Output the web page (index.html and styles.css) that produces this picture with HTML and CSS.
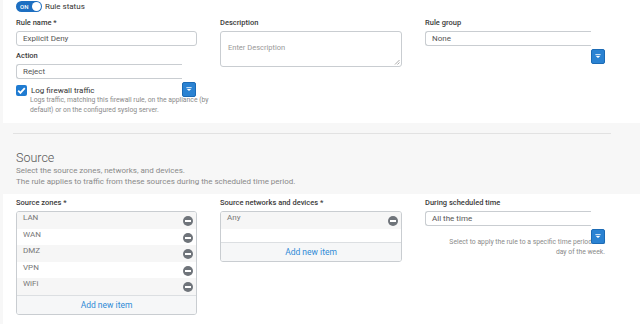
FILE: index.html
```html
<!DOCTYPE html>
<html lang="en">
<head>
    <meta charset="UTF-8">
    <title>Firewall rule</title>
    <link rel="stylesheet" href="styles.css">
</head>
<body>
    <div class="page">
        <section class="card general">
            <div class="status-row">
                <span class="toggle"><span class="toggle-text">ON</span><span class="knob"></span></span>
                <span class="status-label">Rule status</span>
            </div>

            <div class="columns">
                <div class="col">
                    <div class="field-label">Rule name *</div>
                    <div class="input">Explicit Deny</div>

                    <div class="field-label spaced">Action</div>
                    <div class="select">
                        Reject
                        <span class="drop-btn"><svg viewBox="0 0 8 6"><rect x="0.5" y="0" width="7" height="1.2"/><path d="M1 2.2h6L4 5z"/></svg></span>
                    </div>

                    <div class="check-row">
                        <span class="checkbox"><svg viewBox="0 0 10 10"><path d="M2 5.2l2 2 4-4.4" /></svg></span>
                        <span class="check-label">Log firewall traffic</span>
                    </div>
                    <p class="help">Logs traffic, matching this firewall rule, on the appliance (by<br>default) or on the configured syslog server.</p>
                </div>

                <div class="col">
                    <div class="field-label">Description</div>
                    <div class="textarea">
                        <span class="placeholder">Enter Description</span>
                        <svg class="grip" viewBox="0 0 6 6"><path d="M5.5 1L1 5.5M5.5 3.5L3.5 5.5"/></svg>
                    </div>
                </div>

                <div class="col">
                    <div class="field-label">Rule group</div>
                    <div class="select">
                        None
                        <span class="drop-btn"><svg viewBox="0 0 8 6"><rect x="0.5" y="0" width="7" height="1.2"/><path d="M1 2.2h6L4 5z"/></svg></span>
                    </div>
                </div>
            </div>
        </section>

        <section class="band">
            <hr class="divider">
            <h2 class="section-title">Source</h2>
            <p class="section-desc">Select the source zones, networks, and devices.<br>The rule applies to traffic from these sources during the scheduled time period.</p>
        </section>

        <section class="card source">
            <div class="columns">
                <div class="col">
                    <div class="field-label">Source zones *</div>
                    <div class="list">
                        <div class="list-row shaded"><span>LAN</span><span class="minus"></span></div>
                        <div class="list-row"><span>WAN</span><span class="minus"></span></div>
                        <div class="list-row shaded"><span>DMZ</span><span class="minus"></span></div>
                        <div class="list-row"><span>VPN</span><span class="minus"></span></div>
                        <div class="list-row shaded"><span>WiFi</span><span class="minus"></span></div>
                        <div class="list-add">Add new item</div>
                    </div>
                </div>

                <div class="col">
                    <div class="field-label">Source networks and devices *</div>
                    <div class="list">
                        <div class="list-row shaded"><span>Any</span><span class="minus"></span></div>
                        <div class="list-empty"></div>
                        <div class="list-add">Add new item</div>
                    </div>
                </div>

                <div class="col">
                    <div class="field-label">During scheduled time</div>
                    <div class="select">
                        All the time
                        <span class="drop-btn"><svg viewBox="0 0 8 6"><rect x="0.5" y="0" width="7" height="1.2"/><path d="M1 2.2h6L4 5z"/></svg></span>
                    </div>
                    <p class="help right">Select to apply the rule to a specific time period and<br>day of the week.</p>
                </div>
            </div>
        </section>
    </div>
</body>
</html>
```

FILE: styles.css
```css
* {
    margin: 0;
    padding: 0;
    box-sizing: border-box;
}

body {
    font-family: Roboto, "Liberation Sans", Arial, sans-serif;
    background-color: #f7f7f7;
    color: #333;
    width: 640px;
    height: 324px;
    overflow: hidden;
}

.page {
    padding-left: 3px;
}

.card {
    background: #fff;
}

.general {
    height: 123px;
    padding-top: 1px;
}

.status-row {
    display: flex;
    align-items: center;
    gap: 3px;
    padding-left: 13px;
    height: 11px;
}

.toggle {
    width: 26px;
    height: 11px;
    border-radius: 6px;
    background: #1d6fc1;
    display: flex;
    align-items: center;
    justify-content: space-between;
    padding: 0 1px 0 4px;
}

.toggle-text {
    color: #fff;
    font-size: 6px;
    font-weight: 500;
}

.knob {
    width: 9px;
    height: 9px;
    border-radius: 50%;
    background: #fff;
}

.status-label {
    font-size: 8px;
    color: #333;
}

.columns {
    display: grid;
    grid-template-columns: 181px 182px 180px;
    column-gap: 23px;
    padding-left: 13px;
}

.general .columns {
    margin-top: 6px;
}

.col {
    position: relative;
}

.field-label {
    font-size: 7.5px;
    font-weight: 500;
    color: #3a3a3a;
    height: 10px;
    line-height: 10px;
    margin-bottom: 3px;
}

.field-label.spaced {
    margin-top: 5px;
}

.input,
.select {
    height: 15px;
    border: 1px solid #c9cdd1;
    border-radius: 3px;
    font-size: 8px;
    color: #555;
    line-height: 13px;
    padding-left: 6px;
}

.select {
    position: relative;
    width: 166px;
    border-right: none;
    border-radius: 3px 0 0 3px;
    padding-left: 6px;
}

.drop-btn {
    position: absolute;
    right: -14px;
    top: 17px;
    width: 14px;
    height: 15px;
    background: #2a82d2;
    border: 1px solid #1c6bb5;
    border-radius: 2px;
    display: flex;
    align-items: center;
    justify-content: center;
    z-index: 1;
}

.drop-btn svg {
    width: 6px;
    height: 5px;
    fill: #fff;
}

.check-row {
    display: flex;
    align-items: center;
    gap: 4px;
    margin-top: 6px;
    height: 11px;
}

.checkbox {
    width: 11px;
    height: 11px;
    border-radius: 2px;
    background: #1f7bd1;
    display: flex;
}

.checkbox svg {
    width: 11px;
    height: 11px;
    fill: none;
    stroke: #fff;
    stroke-width: 1.6;
}

.check-label {
    font-size: 8px;
    color: #333;
}

.help {
    font-size: 6.8px;
    color: #8a8a8a;
    line-height: 10px;
    padding-left: 14px;
    white-space: nowrap;
    margin-top: -1px;
}

.help.right {
    text-align: right;
    padding-left: 0;
    margin-top: 11px;
}

.textarea {
    position: relative;
    height: 36px;
    border: 1px solid #c9cdd1;
    border-radius: 3px;
    padding: 3px 7px;
}

.placeholder {
    font-size: 7.5px;
    color: #999;
}

.grip {
    position: absolute;
    right: 1px;
    bottom: 1px;
    width: 6px;
    height: 6px;
    stroke: #888;
    stroke-width: 0.7;
}

.band {
    height: 71px;
    padding: 10px 0 0 13px;
}

.divider {
    border: none;
    border-top: 1px solid #e2e2e2;
    width: 598px;
    margin-left: -3px;
}

.section-title {
    font-size: 12.5px;
    font-weight: 300;
    color: #555;
    margin-top: 16px;
    line-height: 15px;
}

.section-desc {
    font-size: 8px;
    color: #8a8a8a;
    line-height: 11px;
}

.source {
    height: 130px;
    padding-top: 4px;
}

.list {
    border: 1px solid #c9cdd1;
    border-radius: 3px;
    overflow: hidden;
}

.list-row {
    height: 16.6px;
    display: flex;
    justify-content: space-between;
    padding: 1px 3px 0 6px;
    font-size: 8px;
    color: #777;
}

.list-row.shaded {
    background: #f6f6f6;
}

.minus {
    width: 10px;
    height: 10px;
    border-radius: 50%;
    background: #6f747a;
    margin-top: 3px;
    position: relative;
}

.minus::after {
    content: "";
    position: absolute;
    left: 2px;
    top: 4px;
    width: 6px;
    height: 2px;
    background: #fff;
}

.list-empty {
    height: 13px;
}

.list-add {
    height: 19px;
    border-top: 1px solid #dcdfe2;
    background: #f6f7f8;
    color: #2f8ad6;
    font-size: 8.5px;
    text-align: center;
    line-height: 18px;
}
```
